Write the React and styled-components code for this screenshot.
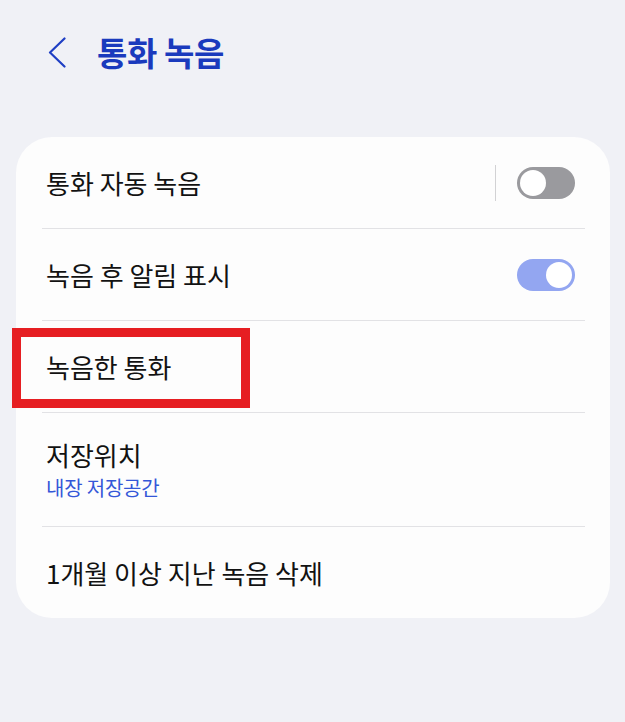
import styled, { createGlobalStyle } from "styled-components";

const GlobalStyle = createGlobalStyle`
  html, body {
    margin: 0;
    padding: 0;
    background: #f0f1f6;
  }
  body {
    font-family: "Noto Sans CJK KR", "Noto Sans", sans-serif;
    color: #111;
  }
`;

const Page = styled.div`
  min-height: 722px;
  box-sizing: border-box;
  padding: 0 15px 0 16px;
  border-left: 1px solid #f8f8fb;
  margin-left: -1px;
`;

const Header = styled.header`
  display: flex;
  align-items: center;
  gap: 31px;
  height: 104px;
  padding-left: 32px;
`;

const BackButton = styled.button`
  display: flex;
  padding: 0;
  border: 0;
  background: none;
  color: #1f3fc4;
`;

const Title = styled.h1`
  margin: 0;
  font-size: 33px;
  font-weight: 700;
  letter-spacing: -0.4px;
  color: #1a3abd;
`;

const Card = styled.section`
  position: relative;
  margin-top: 33px;
  padding: 0 25px 0 26px;
  border-radius: 36px;
  background: #fdfdfd;
`;

const Row = styled.div`
  display: flex;
  align-items: center;
  justify-content: space-between;
  min-height: ${(props) => (props.$tall ? "113px" : "91px")};
  padding: 0 10px 0 4px;

  & + & {
    border-top: 1px solid #e2e2e5;
  }
`;

const Label = styled.div`
  display: flex;
  flex-direction: column;
  gap: 6px;
`;

const Primary = styled.span`
  font-size: 26px;
  line-height: 30px;
  color: #121212;
`;

const Secondary = styled.span`
  font-size: 20px;
  line-height: 24px;
  letter-spacing: -0.2px;
  color: #3457d8;
`;

const Controls = styled.div`
  display: flex;
  align-items: center;
  gap: 21px;
`;

const Separator = styled.span`
  width: 1px;
  height: 36px;
  background: #d2d2d4;
`;

const Track = styled.span`
  position: relative;
  display: block;
  width: 58px;
  height: 32px;
  border-radius: 16px;
  background: ${(props) => (props.$on ? "#93a6f1" : "#9a9a9e")};
`;

const Thumb = styled.span`
  position: absolute;
  top: 3px;
  left: ${(props) => (props.$on ? "29px" : "3px")};
  width: 26px;
  height: 26px;
  border-radius: 50%;
  background: #fff;
`;

// 빨간 강조 박스 (카드 위에 겹쳐 그림)
const Highlight = styled.div`
  position: absolute;
  left: -4px;
  top: 191px;
  width: 238px;
  height: 80px;
  box-sizing: border-box;
  border: 9px solid #e61e22;
  pointer-events: none;
`;

function Toggle({ on }) {
  return (
    <Track $on={on}>
      <Thumb $on={on} />
    </Track>
  );
}

function Chevron() {
  return (
    <svg width="18" height="31" viewBox="0 0 18 31" fill="none">
      <polyline
        points="16.5,1.5 2,15.5 16.5,29.5"
        stroke="currentColor"
        strokeWidth="2.2"
        strokeLinecap="round"
        strokeLinejoin="round"
      />
    </svg>
  );
}

export default function App() {
  return (
    <>
      <GlobalStyle />
      <Page>
        <Header>
          <BackButton aria-label="뒤로">
            <Chevron />
          </BackButton>
          <Title>통화 녹음</Title>
        </Header>

        <Card>
          <Row>
            <Primary>통화 자동 녹음</Primary>
            <Controls>
              <Separator />
              <Toggle on={false} />
            </Controls>
          </Row>
          <Row>
            <Primary>녹음 후 알림 표시</Primary>
            <Toggle on />
          </Row>
          <Row>
            <Primary>녹음한 통화</Primary>
          </Row>
          <Row $tall>
            <Label>
              <Primary>저장위치</Primary>
              <Secondary>내장 저장공간</Secondary>
            </Label>
          </Row>
          <Row>
            <Primary>1개월 이상 지난 녹음 삭제</Primary>
          </Row>
          <Highlight />
        </Card>
      </Page>
    </>
  );
}
